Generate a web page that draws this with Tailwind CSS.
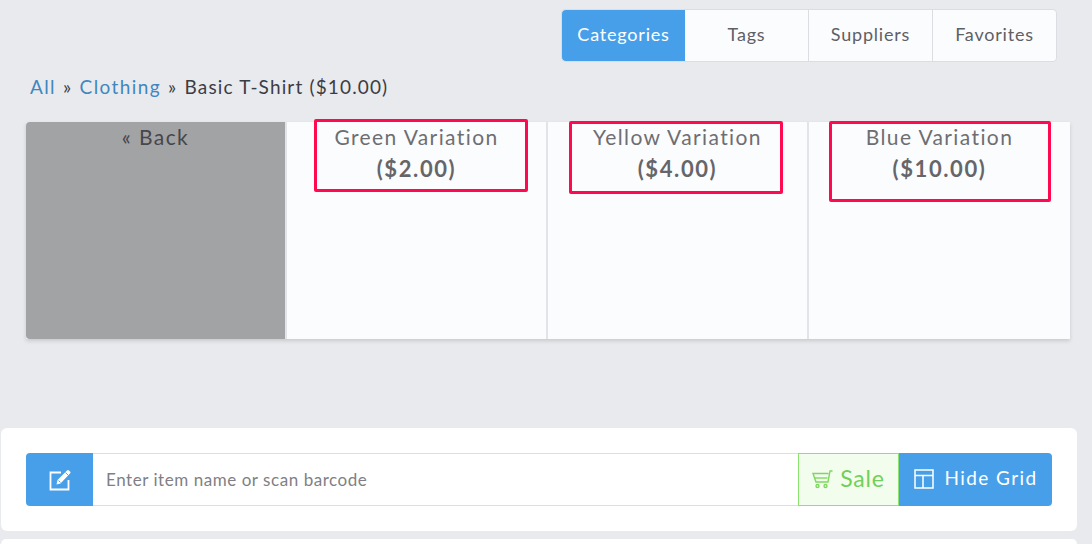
<!DOCTYPE html>
<html lang="en">
<head>
    <meta charset="UTF-8">
    <meta name="viewport" content="width=device-width, initial-scale=1.0">
    <script src="https://cdn.jsdelivr.net/npm/@tailwindcss/browser@4"></script>
    <title>Point of Sale</title>
</head>
<body class="bg-[#e9eaee] h-[544px] overflow-hidden font-['Lato','Open_Sans',sans-serif]">
    <!-- category tabs -->
    <div class="flex justify-end pt-[9px] pr-[35px]">
        <div class="flex h-[53px] w-[496px] border border-[#dcdde3] rounded bg-[#fbfcfe] text-[18px] tracking-[0.8px] leading-[48px] text-center text-[#5f5f66]">
            <div class="w-[123px] h-[51px] bg-[#479fe9] text-white rounded-l">Categories</div>
            <div class="w-[124px] border-r border-[#dcdde3]">Tags</div>
            <div class="w-[124px] border-r border-[#dcdde3]">Suppliers</div>
            <div class="flex-1">Favorites</div>
        </div>
    </div>

    <!-- breadcrumb -->
    <div class="flex gap-[7px] pl-[30px] mt-[12px] h-[26px] leading-[26px] text-[19px] tracking-[1.4px] text-[#3c3c44]">
        <a class="text-[#3f87bf]">All</a><span>»</span><a class="text-[#3f87bf]">Clothing</a><span>»</span><span class="tracking-[1.15px]">Basic T-Shirt ($10.00)</span>
    </div>

    <!-- variation grid -->
    <div class="relative mt-[22px] mx-[26px] w-[1044px] h-[217px] grid grid-cols-[259px_261px_261px_263px] shadow-[0_2px_4px_rgba(0,0,0,0.14)] text-center text-[21px] leading-[31px] tracking-[1.4px] text-[#6e6e72]">
        <div class="bg-[#a2a3a4] text-[#46464c] rounded-l-sm"><div class="-mt-px">« Back</div></div>
        <div class="bg-[#fbfcfe] border-l-2 border-[#e3e4e9]"><div class="-mt-px">Green Variation</div><div class="mt-px font-bold text-[#66666a] text-[22px] tracking-[1.6px]">($2.00)</div></div>
        <div class="bg-[#fbfcfe] border-l-2 border-[#e3e4e9]"><div class="-mt-px">Yellow Variation</div><div class="mt-px font-bold text-[#66666a] text-[22px] tracking-[1.6px]">($4.00)</div></div>
        <div class="bg-[#fbfcfe] border-l-2 border-[#e3e4e9]"><div class="-mt-px">Blue Variation</div><div class="mt-px font-bold text-[#66666a] text-[22px] tracking-[1.6px]">($10.00)</div></div>

        <!-- annotation boxes -->
        <div class="absolute left-[288px] top-[-3px] w-[214px] h-[73px] border-[3px] border-[#ff0a50] rounded-[2px]"></div>
        <div class="absolute left-[543px] top-[-1px] w-[214px] h-[73px] border-[3px] border-[#ff0a50] rounded-[2px]"></div>
        <div class="absolute left-[803px] top-[-1px] w-[222px] h-[81px] border-[3px] border-[#ff0a50] rounded-[2px]"></div>
    </div>

    <!-- search panel -->
    <div class="mt-[89px] ml-[1px] w-[1076px] h-[103px] bg-white rounded-md px-[25px] pt-[25px]">
        <div class="flex h-[53px] w-[1026px]">
            <div class="w-[67px] bg-[#479fe9] rounded-l flex items-center justify-center">
                <svg class="w-[22px] h-[22px]" viewBox="0 0 22 22" fill="none" stroke="white" stroke-width="1.800">
                    <path d="M12 3.500H1.500v17h18V11"/>
                    <path d="M7.500 15.500l1-4.500 9.500-9.500a1.400 1.400 0 0 1 2 0l1 1a1.400 1.400 0 0 1 0 2L11.500 14.500z" fill="white" stroke="none"/>
                    <path d="M16.500 3.500l3 3M9.500 11.500l2 2" stroke="#479fe9" stroke-width="0.900"/>
                </svg>
            </div>
            <div class="flex-1 border-y border-[#dcdde6] flex items-center pl-[13px] text-[17px] tracking-[0.55px] text-[#7f7f85]">Enter item name or scan barcode</div>
            <div class="w-[101px] bg-[#f3fdee] border border-[#8ce46f] flex items-center justify-center gap-[7px] pb-[2px] text-[23px] tracking-[0.8px] text-[#6fd05a]">
                <svg class="w-[21px] h-[19px] shrink-0 mt-[2px]" viewBox="0 0 21 19" fill="none" stroke="#7ed860" stroke-width="1.400">
                    <path d="M20.500 1h-2.500l-2 11H4L1 3.500h15.500"/>
                    <path d="M2.500 8h13"/>
                    <circle cx="5.500" cy="16" r="1.500"/>
                    <circle cx="13.500" cy="16" r="1.500"/>
                </svg>
                Sale
            </div>
            <div class="w-[153px] bg-[#479fe9] rounded-r flex items-center justify-center gap-[11px] pb-[2px] text-[19px] tracking-[1.4px] text-white">
                <svg class="w-[20px] h-[20px] shrink-0" viewBox="0 0 20 20" fill="none" stroke="white" stroke-width="1.500">
                    <rect x="1" y="1" width="18" height="18"/>
                    <path d="M1 6.500h18M9 6.500V19"/>
                </svg>
                Hide Grid
            </div>
        </div>
    </div>

    <!-- next panel, cut off by the window -->
    <div class="mt-[8px] ml-[1px] w-[1076px] h-[5px] bg-white rounded-t-md"></div>
</body>
</html>
